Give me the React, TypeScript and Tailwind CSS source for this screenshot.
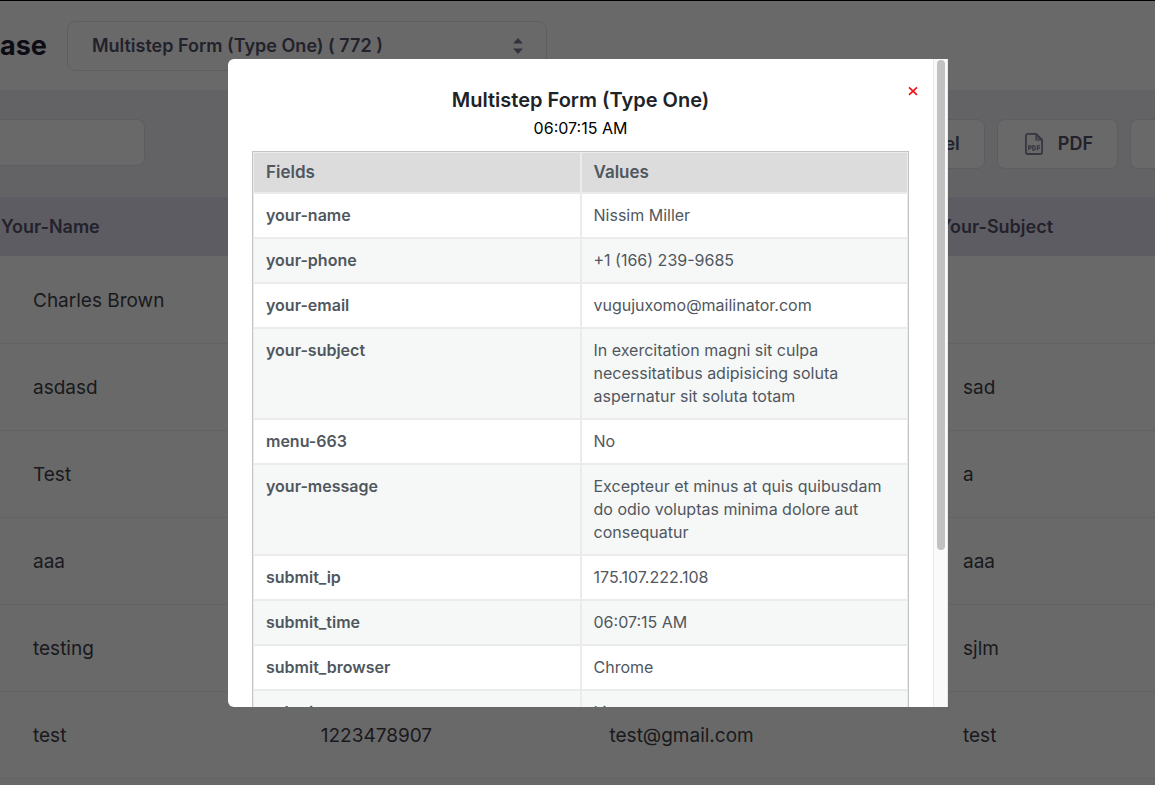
import React from "react";

const submissions = [
  { name: "Charles Brown", phone: "", email: "", subject: "" },
  { name: "asdasd", phone: "", email: "", subject: "sad" },
  { name: "Test", phone: "", email: "", subject: "a" },
  { name: "aaa", phone: "", email: "", subject: "aaa" },
  { name: "testing", phone: "", email: "", subject: "sjlm" },
  { name: "test", phone: "1223478907", email: "test@gmail.com", subject: "test" },
];

const fields = [
  ["your-name", "Nissim Miller"],
  ["your-phone", "+1 (166) 239-9685"],
  ["your-email", "vugujuxomo@mailinator.com"],
  ["your-subject", "In exercitation magni sit culpa necessitatibus adipisicing soluta aspernatur sit soluta totam"],
  ["menu-663", "No"],
  ["your-message", "Excepteur et minus at quis quibusdam do odio voluptas minima dolore aut consequatur"],
  ["submit_ip", "175.107.222.108"],
  ["submit_time", "06:07:15 AM"],
  ["submit_browser", "Chrome"],
  ["submit_os", "Linux"],
];

function PdfIcon() {
  return (
    <svg viewBox="0 0 20 24" className="h-6 w-5" fill="none" stroke="#8583a0" strokeWidth="1.8" aria-hidden="true">
      <path d="M12 1.9H3.9A2 2 0 0 0 1.9 3.9V20a2 2 0 0 0 2 2h12.2a2 2 0 0 0 2-2V8Z" strokeLinejoin="round" />
      <path d="M12 1.9V8h6.1Z" fill="#8583a0" fillOpacity=".45" strokeWidth="1.2" strokeLinejoin="round" />
      <path
        d="M4.7 18.2v-4.3h1.4a1.2 1.2 0 0 1 0 2.4H4.7M8.8 13.9v4.3h.9a1.5 1.5 0 0 0 1.5-1.5v-1.3a1.5 1.5 0 0 0-1.5-1.5ZM13.4 18.4v-4.5h2.6M13.4 16.2H16"
        strokeWidth="1.2"
      />
    </svg>
  );
}

function SortArrows() {
  return (
    <svg viewBox="0 0 10 16" className="pointer-events-none absolute top-[17px] right-6 h-4 w-[10px]" fill="#7d7a94" aria-hidden="true">
      <path d="M5 0 10 5.4H0ZM5 16 0 10.6h10Z" />
    </svg>
  );
}

const toolButton =
  "flex h-[50px] items-center rounded-lg border border-[#e2e0ec] bg-white pr-6 pl-[26px] text-lg font-semibold text-[#55526b]";

function Backdrop() {
  return (
    <div className="min-h-screen overflow-hidden border-t border-black bg-white">
      <header className="flex h-[89px] items-center gap-5">
        <h1 className="text-[27px] leading-8 font-bold text-[#211f33]">ase</h1>
        <div className="relative w-[480px]">
          <select
            aria-label="Form"
            className="h-[50px] w-full appearance-none rounded-lg border border-[#e4e2ef] bg-white pl-6 text-lg font-semibold text-[#55526b]"
          >
            <option>Multistep Form (Type One) ( 772 )</option>
          </select>
          <SortArrows />
        </div>
      </header>
      <div className="flex h-[107px] items-start justify-between bg-[#f0f0f4] pt-[29px]">
        <input
          type="search"
          aria-label="Search"
          className="h-[47px] w-[145px] rounded-r-lg border border-l-0 border-[#e2e0ec] bg-white px-4"
        />
        <div className="flex gap-3">
          <button type="button" className={toolButton}>Excel</button>
          <button type="button" className={toolButton + " gap-[14px]"}>
            <PdfIcon />
            PDF
          </button>
          <button type="button" aria-label="Print" className="h-[50px] w-[25px] rounded-l-lg border border-r-0 border-[#e2e0ec] bg-white" />
        </div>
      </div>
      <table className="w-full table-fixed border-collapse text-left">
        <colgroup>
          <col className="w-[25%]" />
          <col className="w-[25%]" />
          <col />
          <col className="w-[224px]" />
        </colgroup>
        <thead>
          <tr className="h-[59px] bg-[#e3e0f1] text-lg text-[#55526b]">
            <th className="pl-px font-semibold">Your-Name</th>
            <th />
            <th />
            <th className="pl-2 font-semibold">Your-Subject</th>
          </tr>
        </thead>
        <tbody className="text-[19px] text-[#3f4149]">
          {submissions.map((row) => (
            <tr key={row.name} className="h-[87px] border-b border-[#efeff2]">
              <td className="pt-1 pl-[33px]">{row.name}</td>
              <td className="pt-1 pl-8">{row.phone}</td>
              <td className="pt-1 pl-8">{row.email}</td>
              <td className="pt-1 pl-8">{row.subject}</td>
            </tr>
          ))}
        </tbody>
      </table>
    </div>
  );
}

function DetailDialog() {
  return (
    <div
      role="dialog"
      aria-modal="true"
      aria-labelledby="dialog-title"
      className="relative flex h-[648px] w-[720px] overflow-hidden rounded-l-md bg-white"
    >
      <div className="min-w-0 flex-1 overflow-hidden px-6 pt-[27px]">
        <h2 id="dialog-title" className="text-center text-xl leading-7 font-semibold text-[#1d2327]">
          Multistep Form (Type One)
        </h2>
        <p className="pt-[3px] pb-3 text-center text-[16px] leading-[22px] text-black">06:07:15 AM</p>
        <table className="w-full table-fixed border-separate border-spacing-0 border border-[#c3c4c7] text-left align-top text-[#50575e]">
          <thead>
            <tr className="bg-[#dcdcdc] text-[17px] leading-[23px]">
              <th className="border border-[#ebebeb] px-3 py-2 font-semibold">Fields</th>
              <th className="border border-[#ebebeb] px-3 py-2 font-semibold">Values</th>
            </tr>
          </thead>
          <tbody className="text-[16px] leading-[23px]">
            {fields.map(([label, value]) => (
              <tr key={label} className="align-top even:bg-[#f6f7f7]">
                <th scope="row" className="border border-[#ebebeb] px-3 py-[10px] font-semibold">
                  {label}
                </th>
                <td className="border border-[#ebebeb] px-3 py-[10px]">{value}</td>
              </tr>
            ))}
          </tbody>
        </table>
      </div>
      <div className="w-[15px] border-x border-[#e8e8e8] bg-[#fafafa] pt-px pr-[2px] pl-[3px]">
        <div className="h-[490px] rounded-full bg-[#c1c1c1]" />
      </div>
      <button type="button" aria-label="Close" className="absolute top-6 right-[27px] flex size-4 items-center justify-center text-[#f01818]">
        <svg viewBox="0 0 10 10" className="size-[10px]" stroke="currentColor" strokeWidth="1.8" aria-hidden="true">
          <path d="m1 1.4 8 7.4M9 1.4 1 8.8" />
        </svg>
      </button>
    </div>
  );
}

export default function App() {
  return (
    <div className="relative h-screen overflow-hidden font-['Inter',sans-serif]">
      <Backdrop />
      <div className="absolute inset-0 flex items-start justify-center bg-black/59 pt-[59px] pl-[21px]">
        <DetailDialog />
      </div>
    </div>
  );
}
